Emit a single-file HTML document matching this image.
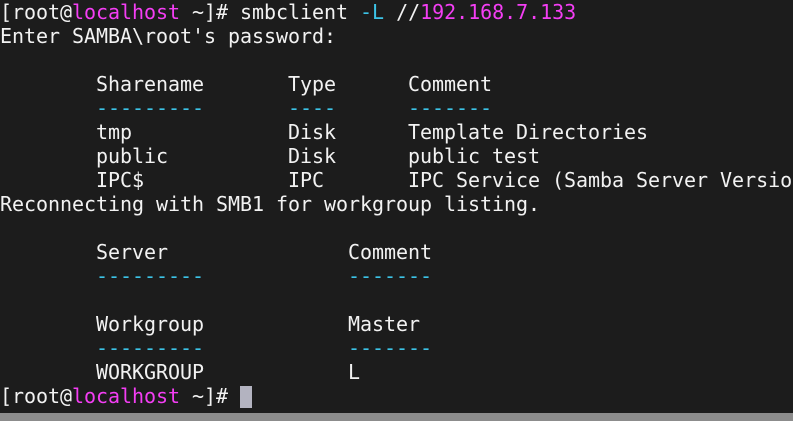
<!DOCTYPE html><html><head><style>
html,body{margin:0;padding:0;background:#1c1c1c;width:793px;height:421px;overflow:hidden}
pre{margin:0;padding:0;font-family:"DejaVu Sans Mono","Liberation Mono",monospace;font-size:20px;line-height:24px;color:#f2f2f2;letter-spacing:-0.04px;white-space:pre}
.m{color:#f43ef4}.c{color:#3cc3e6}
.cur{display:inline-block;width:12px;height:22px;background:#b3b3c0;vertical-align:-5px}
.bar{position:absolute;left:0;top:413px;width:793px;height:8px;background:#8c8c8c}
</style></head><body>
<pre>[root@<span class="m">localhost</span> ~]# smbclient <span class="c">-L</span> //<span class="m">192.168.7.133</span>
Enter SAMBA\root's password:

        Sharename       Type      Comment
        <span class="c">---------       ----      -------</span>
        tmp             Disk      Template Directories
        public          Disk      public test
        IPC$            IPC       IPC Service (Samba Server Version
Reconnecting with SMB1 for workgroup listing.

        Server               Comment
        <span class="c">---------            -------</span>

        Workgroup            Master
        <span class="c">---------            -------</span>
        WORKGROUP            L
[root@<span class="m">localhost</span> ~]# <span class="cur"></span></pre>
<div class="bar"></div>
</body></html>
